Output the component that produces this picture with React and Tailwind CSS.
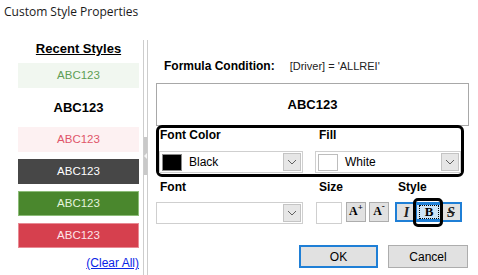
const ui = { fontFamily: '"Liberation Sans", Arial, sans-serif' };

function Chevron() {
  return (
    <svg width="10" height="6" viewBox="0 0 10 6" fill="none">
      <polyline points="1,1 5,5 9,1" stroke="#606060" strokeWidth="1" />
    </svg>
  );
}

function Dropdown({ swatch, label, width }) {
  return (
    <div className={`${width} h-[22px] flex items-center bg-white border border-[#cfcfcf] pl-[2px] pr-[1px]`}>
      {swatch && (
        <div className={`w-[20px] h-[17px] border ${swatch}`} />
      )}
      <span className="ml-[7px] text-[12px] leading-[14px] text-black flex-1">{label}</span>
      <div className="w-[18px] h-[18px] bg-[#e6e6e6] border border-[#c4c4c4] flex items-center justify-center">
        <Chevron />
      </div>
    </div>
  );
}

function Swatch({ className, children }) {
  return (
    <div className={`h-[25px] w-[121px] flex items-center justify-center text-[11.5px] ${className}`}>
      {children}
    </div>
  );
}

export default function App() {
  return (
    <div className="w-[478px] h-[275px] bg-white overflow-hidden text-black" style={ui}>
      <div className="h-[40px] pl-[4px] pt-[4px] text-[12px] leading-[16px] text-[#1a1a1a]" style={{ fontFamily: '"Open Sans", "Noto Sans", sans-serif' }}>
        Custom Style Properties
      </div>
      <div className="flex h-[235px]">
        {/* recent styles */}
        <div className="w-[143px] flex flex-col pl-[18px] pr-[4px]">
          <div className="h-[23px] text-center">
            <span className="block mt-[2px] text-[13px] leading-[13px] font-bold underline">Recent Styles</span>
          </div>
          <div className="flex flex-col gap-[7px]">
            <Swatch className="bg-[#f1f7f0] text-[#5e9e55]">ABC123</Swatch>
            <Swatch className="bg-white text-black font-bold text-[13px]">ABC123</Swatch>
            <Swatch className="bg-[#fdf1f2] text-[#e0566a]">ABC123</Swatch>
            <Swatch className="bg-[#474747] text-white">ABC123</Swatch>
            <Swatch className="bg-[#4a872d] text-[#e4f4dc] border border-[#8cbc78]">ABC123</Swatch>
            <Swatch className="bg-[#d6404e] text-[#fde4e8] border border-[#e88a94]">ABC123</Swatch>
          </div>
          <div className="mt-[8px] text-right text-[12px] leading-[14px] text-[#0a24e6] underline">(Clear All)</div>
        </div>

        {/* splitter */}
        <div className="w-[5px] h-full border-l border-r border-[#cdcdcd] bg-white">
          <div className="mt-[97px] h-[38px] bg-[#c9c9c9] flex items-center justify-start">
            <svg width="3" height="6" viewBox="0 0 3 6">
              <polygon points="3,0 0,3 3,6" fill="#f5f5f5" />
            </svg>
          </div>
        </div>

        {/* right panel */}
        <div className="flex-1 pl-[8px] flex flex-col">
          <div className="h-[43px] flex items-end pb-[10px]">
            <span className="ml-[8px] text-[12px] leading-[14px] font-bold">Formula Condition:</span>
            <span className="ml-[15px] text-[11px] leading-[14px] text-[#222]">[Driver] = 'ALLREI'</span>
          </div>
          <div className="w-[313px] h-[43px] border border-[#a8a8a8] flex items-center justify-center text-[13px] font-bold">
            ABC123
          </div>
          <div className="w-[308px] h-[52px] mt-[-1px] border-[3px] border-black rounded-[6px] flex gap-[12px] pl-0">
            <div className="flex flex-col">
              <span className="ml-[1px] text-[12px] leading-[14px] font-bold">Font Color</span>
              <div className="mt-[9px]">
                <Dropdown swatch="bg-black border-[#8a8a8a]" label="Black" width="w-[144px]" />
              </div>
            </div>
            <div className="flex flex-col">
              <span className="ml-[4px] text-[12px] leading-[14px] font-bold">Fill</span>
              <div className="mt-[9px]">
                <Dropdown swatch="bg-white border-[#bdbdbd]" label="White" width="w-[146px]" />
              </div>
            </div>
          </div>

          <div className="flex mt-[3px] h-[14px] text-[12px] leading-[14px] font-bold">
            <span className="ml-[4px] w-[159px]">Font</span>
            <span className="w-[79px]">Size</span>
            <span>Style</span>
          </div>
          <div className="flex items-start mt-[8px]">
            <Dropdown label="" width="w-[147px]" />
            <div className="ml-[13px] w-[26px] h-[22px] bg-white border border-[#cfcfcf]" />
            <button className="ml-[4px] w-[20px] h-[20px] bg-[#e1e1e1] border border-[#adadad] flex items-start justify-center pt-[2px] leading-none" style={{ fontFamily: '"Liberation Serif", serif' }}>
              <span className="text-[12px] font-bold">A</span><span className="text-[9px] font-bold mt-[-2px]">+</span>
            </button>
            <button className="ml-[3px] w-[20px] h-[20px] bg-[#e1e1e1] border border-[#adadad] flex items-start justify-center pt-[2px] leading-none" style={{ fontFamily: '"Liberation Serif", serif' }}>
              <span className="text-[12px] font-bold">A</span><span className="text-[9px] font-bold mt-[-3px]">-</span>
            </button>
            <div className="relative ml-[6px] w-[67px] h-[20px] border-2 border-[#1f7fd6] bg-[#e1e1e1] flex items-center" style={{ fontFamily: '"Liberation Serif", serif' }}>
              <div className="w-[19px] h-full flex items-center justify-center text-[14px] italic font-bold text-[#222]">I</div>
              <div className="w-[26px] h-full bg-[#cce4f7] border border-[#1f7fd6] flex items-center justify-center">
                <div className="w-[20px] h-[14px] border border-dotted border-black flex items-center justify-center text-[13px] font-bold">B</div>
              </div>
              <div className="flex-1 h-full flex items-center justify-center text-[14px] italic font-bold line-through text-[#222]">S</div>
              <div className="absolute left-[16px] top-[-6px] w-[30px] h-[29px] border-[3px] border-black rounded-[5px] pointer-events-none" />
            </div>
          </div>

          <div className="flex mt-[21px] ml-[143px] gap-[10px]">
            <button className="w-[79px] h-[23px] bg-[#e1e1e1] border-2 border-[#1f7fd6] text-[12px] leading-[14px]">OK</button>
            <button className="w-[80px] h-[23px] bg-[#e1e1e1] border border-[#adadad] text-[12px] leading-[14px]">Cancel</button>
          </div>
        </div>
      </div>
    </div>
  );
}
